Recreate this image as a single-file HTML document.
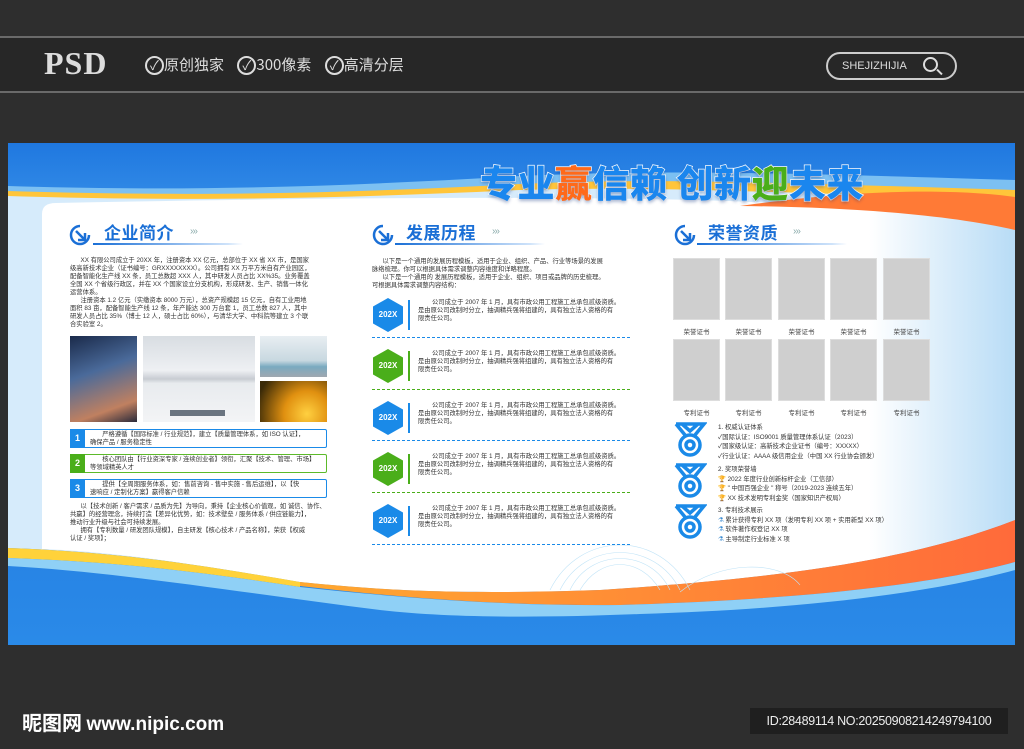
<!DOCTYPE html>
<html><head><meta charset="utf-8">
<style>
*{margin:0;padding:0;box-sizing:border-box}
body{width:1024px;height:749px;overflow:hidden;background:#2e2e2e;font-family:"Liberation Sans","Noto Sans CJK SC",sans-serif;position:relative}
.abs{position:absolute}
.t{position:absolute;font-size:6.3px;line-height:8px;color:#333;white-space:nowrap}
.h2{position:absolute;font-size:17px;font-weight:bold;color:#1a6fd6;font-family:"Noto Sans CJK SC",sans-serif;letter-spacing:0.5px}
.arr{position:absolute;font-size:10px;color:#8aa;letter-spacing:-1px}
.ul{position:absolute;height:2px;background:linear-gradient(90deg,#1a6fd6,#cfe3fa 90%,transparent)}
.cert{position:absolute;width:47px;height:62px;background:#cfcfcf;border:1px solid #ddd}
.cl{position:absolute;width:47px;text-align:center;font-size:6.5px;color:#444}
.hex{position:absolute;width:30px;height:34px;clip-path:polygon(50% 0,100% 25%,100% 75%,50% 100%,0 75%,0 25%);color:#fff;font-size:8px;font-weight:bold;text-align:center;line-height:34px}
.vb{position:absolute;width:2px;height:30px}
.dash{position:absolute;left:372px;width:258px;height:0;border-top:1.5px dashed}
.nb{position:absolute;left:70px;width:257px;height:19px;border:1.5px solid;border-radius:2px;background:#fff}
.nb b{position:absolute;left:-1px;top:-1px;width:15px;height:19px;color:#fff;font-size:9px;text-align:center;line-height:19px}
.nb span{position:absolute;left:19px;top:1px;font-size:6.3px;line-height:8px;color:#333;white-space:nowrap}
</style></head><body>
<div class="abs" style="left:0;top:36px;width:1024px;height:2px;background:#6a6a6a"></div>
<div class="abs" style="left:0;top:38px;width:1024px;height:54px;background:#272727"></div>
<div class="abs" style="left:0;top:91px;width:1024px;height:2px;background:#6a6a6a"></div>
<div class="abs" style="left:44px;top:45px;font-family:'Liberation Serif',serif;font-size:32px;font-weight:bold;color:#ddd;letter-spacing:1px">PSD</div>
<div class="abs" style="left:145px;top:54px;color:#ddd;font-size:15px;font-family:'Noto Sans CJK SC',sans-serif">
<span style="display:inline-block;width:19px;height:19px;border:2px solid #ddd;border-radius:50%;text-align:center;line-height:14px;font-size:13px;vertical-align:middle">✓</span>原创独家
<span style="display:inline-block;width:19px;height:19px;border:2px solid #ddd;border-radius:50%;text-align:center;line-height:14px;font-size:13px;vertical-align:middle;margin-left:10px">✓</span>300像素
<span style="display:inline-block;width:19px;height:19px;border:2px solid #ddd;border-radius:50%;text-align:center;line-height:14px;font-size:13px;vertical-align:middle;margin-left:10px">✓</span>高清分层</div>
<div class="abs" style="left:826px;top:52px;width:131px;height:28px;border:2px solid #ccc;border-radius:14px;color:#ddd;font-size:11px;line-height:24px;padding-left:14px">SHEJIZHIJIA</div>
<div class="abs" style="left:923px;top:57px;width:15px;height:15px;border:2px solid #ddd;border-radius:50%"></div>
<div class="abs" style="left:936px;top:71px;width:7px;height:2px;background:#ddd;transform:rotate(45deg)"></div>

<svg class="abs" style="left:8px;top:143px" width="1007" height="502" viewBox="8 143 1007 502">
<defs>
<linearGradient id="bt" x1="0" y1="0" x2="0" y2="1"><stop offset="0" stop-color="#1f78e0"/><stop offset="1" stop-color="#3d95ea"/></linearGradient>
<linearGradient id="bb" x1="0" y1="0" x2="0" y2="1"><stop offset="0" stop-color="#1a66d4"/><stop offset="1" stop-color="#2a8ae8"/></linearGradient>
<linearGradient id="or" x1="0" y1="0" x2="1" y2="0"><stop offset="0" stop-color="#ffa830"/><stop offset="0.5" stop-color="#ff8a36"/><stop offset="1" stop-color="#ff6a3a"/></linearGradient>
<linearGradient id="pn" x1="0" y1="0" x2="1" y2="0"><stop offset="0" stop-color="#fff"/><stop offset="0.85" stop-color="#fff"/><stop offset="1" stop-color="#b8dcf6"/></linearGradient>
</defs>
<rect x="8" y="143" width="1007" height="502" fill="url(#bb)"/>
<rect x="8" y="143" width="1007" height="90" fill="url(#bt)"/>
<path d="M8 186 C200 192 350 186 520 176 C650 170 760 172 1015 180 L1015 240 L8 240Z" fill="#7cc0f2"/>
<path d="M8 191 C200 197 350 193 520 184 C650 178 760 182 1015 190 L1015 240 L8 240Z" fill="#ffc53a"/>
<path d="M8 196 C200 202 350 198 520 190 C650 186 760 192 1015 200 L1015 520 C900 565 750 580 600 590 C450 595 380 590 300 582 C200 565 120 552 8 548Z" fill="#d6ebfb"/>
<path d="M42 214 Q42 203 56 203 C300 198 520 196 700 200 C850 205 950 215 1015 228 L1015 520 C900 565 750 580 600 590 C450 595 380 590 300 582 C200 565 120 552 42 549Z" fill="url(#pn)"/>
<path d="M740 206 C850 190 950 188 1015 197 L1015 230 C950 215 850 207 740 206Z" fill="#ff7a36"/>
<path d="M1015 520 C900 565 750 580 600 590 C450 595 380 590 300 582 L300 586 C420 600 520 606 620 605 C780 600 920 588 1015 562Z" fill="url(#or)"/>
<path d="M8 548 C120 552 200 565 300 582 L300 587 C200 572 120 562 8 558Z" fill="#ffd23a"/>
<path d="M8 558 C120 562 200 572 300 587 C420 600 520 606 620 605 C780 600 920 588 1015 562 L1015 570 C920 596 780 610 640 614 C540 618 450 618 380 610 C250 594 120 572 8 566Z" fill="#8fd0f6"/>
<g fill="none" stroke="#bfe3f7" stroke-width="0.6">
<path d="M550 590 C580 530 660 530 690 590"/><path d="M560 590 C585 540 655 540 680 590"/><path d="M570 590 C590 548 650 548 670 590"/><path d="M580 590 C600 556 640 556 660 590"/><path d="M680 592 C720 560 780 560 800 585"/></g>
</svg>
<div class="abs" style="left:480px;top:154px;font-family:'Noto Sans CJK SC',sans-serif;font-weight:900;font-size:37px;letter-spacing:0.5px;color:#1a86ee;-webkit-text-stroke:1.5px #fff;paint-order:stroke;text-shadow:0 2px 3px rgba(0,40,120,.35);white-space:nowrap">专业<span style="color:#ff6a1a">赢</span>信赖 创新<span style="color:#4aae1a">迎</span>未来</div>

<svg class="abs" style="left:68px;top:223px" width="24" height="24" viewBox="0 0 24 24"><path d="M12 3 A9 9 0 1 0 21 12" fill="none" stroke="#1a6fd6" stroke-width="2.5"/><path d="M8 8 L17 17 M17 10 L17 17 L10 17" fill="none" stroke="#1a6fd6" stroke-width="2.5"/></svg>
<div class="h2" style="left:104px;top:219px">企业简介</div><div class="arr" style="left:190px;top:226px">›››</div><div class="ul" style="left:93px;top:243px;width:150px"></div>
<svg class="abs" style="left:371px;top:223px" width="24" height="24" viewBox="0 0 24 24"><path d="M12 3 A9 9 0 1 0 21 12" fill="none" stroke="#1a6fd6" stroke-width="2.5"/><path d="M8 8 L17 17 M17 10 L17 17 L10 17" fill="none" stroke="#1a6fd6" stroke-width="2.5"/></svg>
<div class="h2" style="left:406px;top:219px">发展历程</div><div class="arr" style="left:492px;top:226px">›››</div><div class="ul" style="left:395px;top:243px;width:150px"></div>
<svg class="abs" style="left:673px;top:223px" width="24" height="24" viewBox="0 0 24 24"><path d="M12 3 A9 9 0 1 0 21 12" fill="none" stroke="#1a6fd6" stroke-width="2.5"/><path d="M8 8 L17 17 M17 10 L17 17 L10 17" fill="none" stroke="#1a6fd6" stroke-width="2.5"/></svg>
<div class="h2" style="left:708px;top:219px">荣誉资质</div><div class="arr" style="left:793px;top:226px">›››</div><div class="ul" style="left:697px;top:243px;width:150px"></div>

<div class="t" style="left:70px;top:257px">&nbsp;&nbsp;&nbsp;&nbsp;&nbsp;&nbsp;XX 有限公司成立于 20XX 年，注册资本 XX 亿元，总部位于 XX 省 XX 市，是国家<br>级高新技术企业（证书编号：GRXXXXXXXX）。公司拥有 XX 万平方米自有产业园区，<br>配备智能化生产线 XX 条，员工总数超 XXX 人，其中研发人员占比 XX%35。业务覆盖<br>全国 XX 个省级行政区，并在 XX 个国家设立分支机构，形成研发、生产、销售一体化<br>运营体系。<br>&nbsp;&nbsp;&nbsp;&nbsp;&nbsp;&nbsp;注册资本 1.2 亿元（实缴资本 8000 万元），总资产规模超 15 亿元，自有工业用地<br>面积 83 亩，配备智能生产线 12 条，年产能达 300 万台套 1，员工总数 827 人，其中<br>研发人员占比 35%（博士 12 人，硕士占比 60%），与清华大学、中科院等建立 3 个联<br>合实验室 2。</div>
<div class="abs" style="left:70px;top:336px;width:67px;height:86px;background:linear-gradient(160deg,#1a2a4a,#4a6a9a 40%,#c08060 80%,#2a2a3a)"></div>
<div class="abs" style="left:143px;top:336px;width:112px;height:86px;background:linear-gradient(180deg,#d8dde2,#eef0f3 40%,#c8ccd2 50%,#e8ebee 55%,#f3f4f6)"></div>
<div class="abs" style="left:170px;top:410px;width:55px;height:6px;background:#6a7480"></div>
<div class="abs" style="left:260px;top:336px;width:67px;height:41px;background:linear-gradient(180deg,#e8eef2,#c8d8e0 60%,#7aaac0 75%,#a0a8b0)"></div>
<div class="abs" style="left:260px;top:381px;width:67px;height:41px;background:radial-gradient(circle at 70% 80%,#ffd040,#e09010 40%,#3a2a08 90%)"></div>
<div class="nb" style="top:429px;border-color:#1a8ae8"><b style="background:#1a8ae8">1</b><span>&nbsp;&nbsp;&nbsp;&nbsp;&nbsp;&nbsp;&nbsp;严格遵循【国际标准 / 行业规范】，建立【质量管理体系，如 ISO 认证】，<br>确保产品 / 服务稳定性</span></div>
<div class="nb" style="top:454px;border-color:#5cba2a"><b style="background:#4aae1a">2</b><span>&nbsp;&nbsp;&nbsp;&nbsp;&nbsp;&nbsp;&nbsp;核心团队由【行业资深专家 / 连续创业者】领衔，汇聚【技术、管理、市场】<br>等领域精英人才</span></div>
<div class="nb" style="top:479px;border-color:#1a8ae8"><b style="background:#1a8ae8">3</b><span>&nbsp;&nbsp;&nbsp;&nbsp;&nbsp;&nbsp;&nbsp;提供【全周期服务体系，如：售前咨询 - 售中实施 - 售后运维】，以【快<br>速响应 / 定制化方案】赢得客户信赖</span></div>
<div class="t" style="left:70px;top:503px">&nbsp;&nbsp;&nbsp;&nbsp;&nbsp;&nbsp;以【技术创新 / 客户需求 / 品质为先】为导向，秉持【企业核心价值观，如 诚信、协作、<br>共赢】的经营理念，持续打造【差异化优势，如：技术壁垒 / 服务体系 / 供应链能力】，<br>推动行业升级与社会可持续发展。<br>&nbsp;&nbsp;&nbsp;&nbsp;&nbsp;&nbsp;拥有【专利数量 / 研发团队规模】，自主研发【核心技术 / 产品名称】，荣获【权威<br>认证 / 奖项】；</div>

<div class="t" style="left:372px;top:258px">&nbsp;&nbsp;&nbsp;&nbsp;&nbsp;&nbsp;以下是一个通用的发展历程模板，适用于企业、组织、产品、行业等场景的发展<br>脉络梳理。你可以根据具体需求调整内容维度和详略程度。<br>&nbsp;&nbsp;&nbsp;&nbsp;&nbsp;&nbsp;以下是一个通用的 发展历程模板，适用于企业、组织、项目或品牌的历史梳理。<br>可根据具体需求调整内容结构：</div>
<div class="hex" style="left:373px;top:298px;background:#1a8ae8">202X</div><div class="vb" style="left:408px;top:300px;background:#1a8ae8"></div>
<div class="t" style="left:418px;top:299px">&nbsp;&nbsp;&nbsp;&nbsp;&nbsp;&nbsp;&nbsp;&nbsp;公司成立于 2007 年 1 月，具有市政公用工程施工总承包贰级资质。<br>是由原公司改制时分立，抽调精兵强将组建的，具有独立法人资格的有<br>限责任公司。</div>
<div class="dash" style="top:337px;border-color:#1a8ae8"></div>
<div class="hex" style="left:373px;top:349px;background:#4aae1a">202X</div><div class="vb" style="left:408px;top:351px;background:#4aae1a"></div>
<div class="t" style="left:418px;top:350px">&nbsp;&nbsp;&nbsp;&nbsp;&nbsp;&nbsp;&nbsp;&nbsp;公司成立于 2007 年 1 月，具有市政公用工程施工总承包贰级资质。<br>是由原公司改制时分立，抽调精兵强将组建的，具有独立法人资格的有<br>限责任公司。</div>
<div class="dash" style="top:389px;border-color:#4aae1a"></div>
<div class="hex" style="left:373px;top:401px;background:#1a8ae8">202X</div><div class="vb" style="left:408px;top:403px;background:#1a8ae8"></div>
<div class="t" style="left:418px;top:402px">&nbsp;&nbsp;&nbsp;&nbsp;&nbsp;&nbsp;&nbsp;&nbsp;公司成立于 2007 年 1 月，具有市政公用工程施工总承包贰级资质。<br>是由原公司改制时分立，抽调精兵强将组建的，具有独立法人资格的有<br>限责任公司。</div>
<div class="dash" style="top:440px;border-color:#1a8ae8"></div>
<div class="hex" style="left:373px;top:452px;background:#4aae1a">202X</div><div class="vb" style="left:408px;top:454px;background:#4aae1a"></div>
<div class="t" style="left:418px;top:453px">&nbsp;&nbsp;&nbsp;&nbsp;&nbsp;&nbsp;&nbsp;&nbsp;公司成立于 2007 年 1 月，具有市政公用工程施工总承包贰级资质。<br>是由原公司改制时分立，抽调精兵强将组建的，具有独立法人资格的有<br>限责任公司。</div>
<div class="dash" style="top:492px;border-color:#4aae1a"></div>
<div class="hex" style="left:373px;top:504px;background:#1a8ae8">202X</div><div class="vb" style="left:408px;top:506px;background:#1a8ae8"></div>
<div class="t" style="left:418px;top:505px">&nbsp;&nbsp;&nbsp;&nbsp;&nbsp;&nbsp;&nbsp;&nbsp;公司成立于 2007 年 1 月，具有市政公用工程施工总承包贰级资质。<br>是由原公司改制时分立，抽调精兵强将组建的，具有独立法人资格的有<br>限责任公司。</div>
<div class="dash" style="top:544px;border-color:#1a8ae8"></div>

<div class="cert" style="left:673px;top:258px"></div><div class="cert" style="left:725px;top:258px"></div><div class="cert" style="left:778px;top:258px"></div><div class="cert" style="left:830px;top:258px"></div><div class="cert" style="left:883px;top:258px"></div>
<div class="cl" style="left:673px;top:326px">荣誉证书</div><div class="cl" style="left:725px;top:326px">荣誉证书</div><div class="cl" style="left:778px;top:326px">荣誉证书</div><div class="cl" style="left:830px;top:326px">荣誉证书</div><div class="cl" style="left:883px;top:326px">荣誉证书</div>
<div class="cert" style="left:673px;top:339px"></div><div class="cert" style="left:725px;top:339px"></div><div class="cert" style="left:778px;top:339px"></div><div class="cert" style="left:830px;top:339px"></div><div class="cert" style="left:883px;top:339px"></div>
<div class="cl" style="left:673px;top:407px">专利证书</div><div class="cl" style="left:725px;top:407px">专利证书</div><div class="cl" style="left:778px;top:407px">专利证书</div><div class="cl" style="left:830px;top:407px">专利证书</div><div class="cl" style="left:883px;top:407px">专利证书</div>
<svg class="abs" style="left:673px;top:421px" width="34" height="122" viewBox="0 0 34 122">
<g fill="none" stroke="#1a8ae8" stroke-width="3.5"><g id="m"><path d="M3 3 L31 3 L22 14 M3 3 L12 14 M9 3 L17 10 L25 3"/><circle cx="17" cy="24" r="10"/><circle cx="17" cy="24" r="4"/></g>
<use href="#m" y="41"/><use href="#m" y="82"/></g></svg>
<div class="t" style="left:718px;top:423px;line-height:9.5px">1. 权威认证体系<br>✓国际认证：ISO9001 质量管理体系认证（2023）<br>✓国家级认证：高新技术企业证书（编号：XXXXX）<br>✓行业认证：AAAA 级信用企业（中国 XX 行业协会颁发）</div>
<div class="t" style="left:718px;top:465px;line-height:9.5px">2. 奖项荣誉墙<br><span style="color:#e8a010">🏆</span> 2022 年度行业创新标杆企业（工信部）<br><span style="color:#e8a010">🏆</span> " 中国百强企业 " 称号（2019-2023 连续五年）<br><span style="color:#e8a010">🏆</span> XX 技术发明专利金奖（国家知识产权局）</div>
<div class="t" style="left:718px;top:506px;line-height:9.5px">3. 专利技术展示<br><span style="color:#3a8ad0">⚗</span> 累计获得专利 XX 项（发明专利 XX 项 + 实用新型 XX 项）<br><span style="color:#3a8ad0">⚗</span> 软件著作权登记 XX 项<br><span style="color:#3a8ad0">⚗</span> 主导制定行业标准 X 项</div>

<div class="abs" style="left:22px;top:707px;color:#fff;font-size:20px;font-weight:bold;font-family:'Noto Sans CJK SC',sans-serif;white-space:nowrap">昵图网 <span style="font-family:'Liberation Sans',sans-serif;font-size:19px">www.nipic.com</span></div>
<div class="abs" style="left:750px;top:708px;width:258px;height:26px;background:#1f1f1f;color:#eee;font-size:12.5px;line-height:26px;text-align:center;letter-spacing:-0.3px">ID:28489114 NO:20250908214249794100</div>
</body></html>
